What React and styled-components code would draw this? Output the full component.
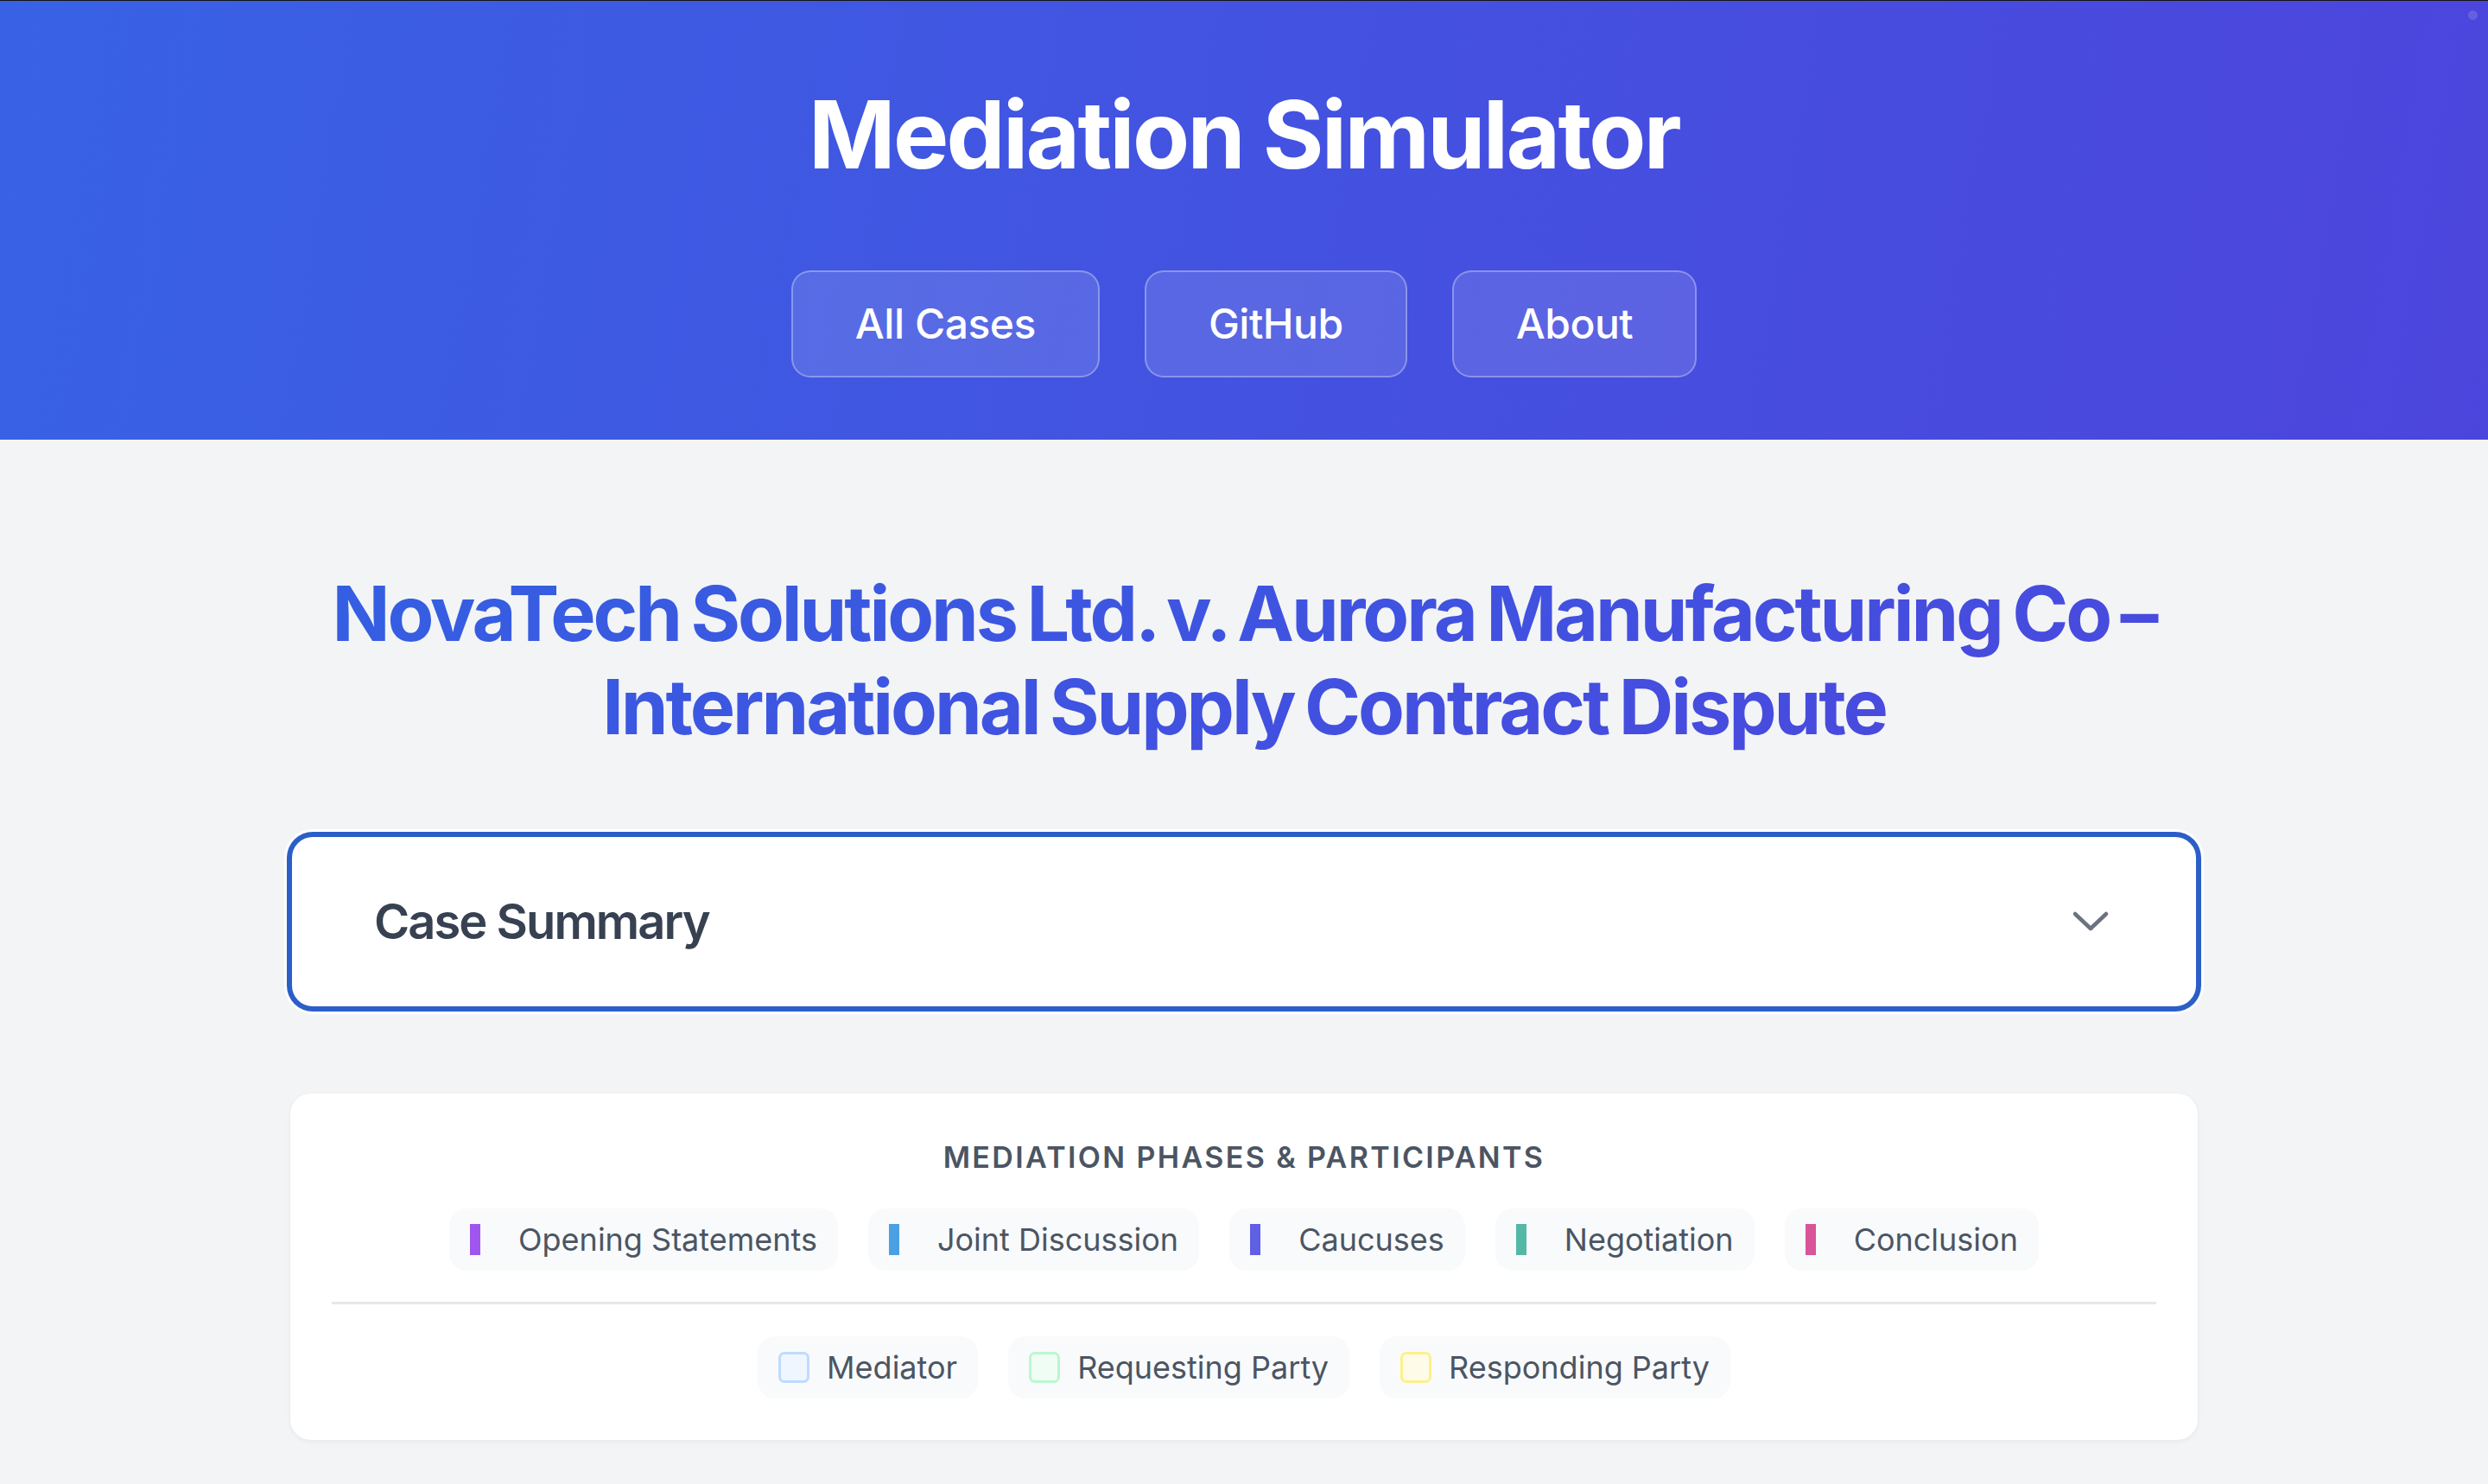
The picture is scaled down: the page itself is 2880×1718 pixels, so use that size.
import React from 'react';
import styled, { createGlobalStyle } from 'styled-components';

const GlobalStyle = createGlobalStyle`
  * { box-sizing: border-box; }
  html, body {
    margin: 0;
    padding: 0;
    background: #f3f4f6;
    font-family: Inter, "Noto Sans", "Liberation Sans", sans-serif;
    -webkit-font-smoothing: antialiased;
  }
  #root { min-height: 100vh; }
`;

const Header = styled.header`
  position: relative;
  border-top: 1px solid #151515;
  background: linear-gradient(100deg, #3862e5 0%, #4451e0 55%, #4c45dd 100%);
  padding: 90px 48px 72px;
  display: flex;
  flex-direction: column;
  align-items: center;
`;

const Dot = styled.span`
  position: absolute;
  top: 11px;
  right: 12px;
  width: 11px;
  height: 11px;
  border-radius: 50%;
  background: rgba(255, 255, 255, 0.14);
`;

const SiteTitle = styled.h1`
  margin: 0;
  font-size: 108px;
  line-height: 130px;
  font-weight: 700;
  letter-spacing: -0.025em;
  color: #ffffff;
`;

const Nav = styled.nav`
  display: flex;
  gap: 52px;
  margin-top: 92px;
`;

const NavButton = styled.a`
  display: inline-flex;
  align-items: center;
  padding: 24px 72px;
  font-size: 48px;
  line-height: 72px;
  font-weight: 500;
  letter-spacing: -0.01em;
  color: #ffffff;
  text-decoration: none;
  background: rgba(255, 255, 255, 0.12);
  border: 2px solid rgba(255, 255, 255, 0.3);
  border-radius: 22px;
  cursor: pointer;
`;

const Main = styled.main`
  max-width: 2304px;
  margin: 0 auto;
  padding: 147px 48px 48px;
`;

const CaseTitle = styled.h2`
  margin: 0 0 95px;
  text-align: center;
  font-size: 88px;
  line-height: 108px;
  font-weight: 700;
  letter-spacing: -0.035em;
  word-spacing: -0.06em;
  background: linear-gradient(160deg, #3360e2 0%, #4250e0 60%, #4c47dc 100%);
  -webkit-background-clip: text;
  background-clip: text;
  color: transparent;
`;

const SummaryToggle = styled.button`
  width: 100%;
  height: 200px;
  display: flex;
  align-items: center;
  justify-content: space-between;
  padding: 0 100px 0 95px;
  background: #ffffff;
  border: 2px solid #2b5fc7;
  border-radius: 26px;
  box-shadow: 0 0 0 4px #2b5fc7, 0 0 0 7px #ffffff;
  font-family: inherit;
  cursor: pointer;
`;

const SummaryLabel = styled.span`
  font-size: 56px;
  font-weight: 600;
  letter-spacing: -0.035em;
  color: #374151;
`;

const LegendCard = styled.section`
  margin-top: 99px;
  background: #ffffff;
  border-radius: 24px;
  padding: 48px;
  box-shadow: 0 2px 6px rgba(0, 0, 0, 0.05);
  display: flex;
  flex-direction: column;
  align-items: center;
`;

const LegendHeading = styled.h3`
  margin: 0 0 34px;
  font-size: 34px;
  line-height: 51px;
  font-weight: 600;
  letter-spacing: 0.07em;
  text-transform: uppercase;
  color: #4b5563;
`;

const PillRow = styled.div`
  display: flex;
  justify-content: center;
  flex-wrap: wrap;
  gap: 35px;
`;

const Divider = styled.hr`
  align-self: stretch;
  margin: 36px 0 37px;
  border: 0;
  height: 3px;
  background: #e5e7eb;
`;

const Pill = styled.div`
  display: flex;
  align-items: center;
  gap: ${(p) => p.$gap}px;
  padding: 9px 24px;
  background: #f9fafb;
  border-radius: 20px;
  font-size: 36px;
  line-height: 54px;
  color: #4b5563;
`;

const PhaseBar = styled.span`
  width: 12px;
  height: 36px;
  background: ${(p) => p.$color};
`;

const RoleSwatch = styled.span`
  width: 36px;
  height: 36px;
  border-radius: 7px;
  border: 3px solid ${(p) => p.$border};
  background: ${(p) => p.$fill};
`;

const ChevronDown = () => (
  <svg width="44" height="26" viewBox="0 0 44 26" fill="none">
    <polyline
      points="4,4 22,21 40,4"
      stroke="#6b7280"
      strokeWidth="4.5"
      strokeLinecap="round"
      strokeLinejoin="round"
    />
  </svg>
);

const phases = [
  { name: 'Opening Statements', color: '#a056ee' },
  { name: 'Joint Discussion', color: '#4aa0e2' },
  { name: 'Caucuses', color: '#5f60e4' },
  { name: 'Negotiation', color: '#54b8a6' },
  { name: 'Conclusion', color: '#d9559a' },
];

const roles = [
  { name: 'Mediator', border: '#bfdbfe', fill: '#eff6ff' },
  { name: 'Requesting Party', border: '#bbf7d0', fill: '#f0fdf4' },
  { name: 'Responding Party', border: '#fef08a', fill: '#fefce8' },
];

const App = () => {
  return (
    <>
      <GlobalStyle />
      <Header>
        <Dot />
        <SiteTitle>Mediation Simulator</SiteTitle>
        <Nav>
          <NavButton>All Cases</NavButton>
          <NavButton>GitHub</NavButton>
          <NavButton>About</NavButton>
        </Nav>
      </Header>
      <Main>
        <CaseTitle>
          NovaTech Solutions Ltd. v. Aurora Manufacturing Co –<br />
          International Supply Contract Dispute
        </CaseTitle>
        <SummaryToggle>
          <SummaryLabel>Case Summary</SummaryLabel>
          <ChevronDown />
        </SummaryToggle>
        <LegendCard>
          <LegendHeading>Mediation Phases &amp; Participants</LegendHeading>
          <PillRow>
            {phases.map((p) => (
              <Pill key={p.name} $gap={44}>
                <PhaseBar $color={p.color} />
                {p.name}
              </Pill>
            ))}
          </PillRow>
          <Divider />
          <PillRow>
            {roles.map((r) => (
              <Pill key={r.name} $gap={20}>
                <RoleSwatch $border={r.border} $fill={r.fill} />
                {r.name}
              </Pill>
            ))}
          </PillRow>
        </LegendCard>
      </Main>
    </>
  );
};

export default App;
